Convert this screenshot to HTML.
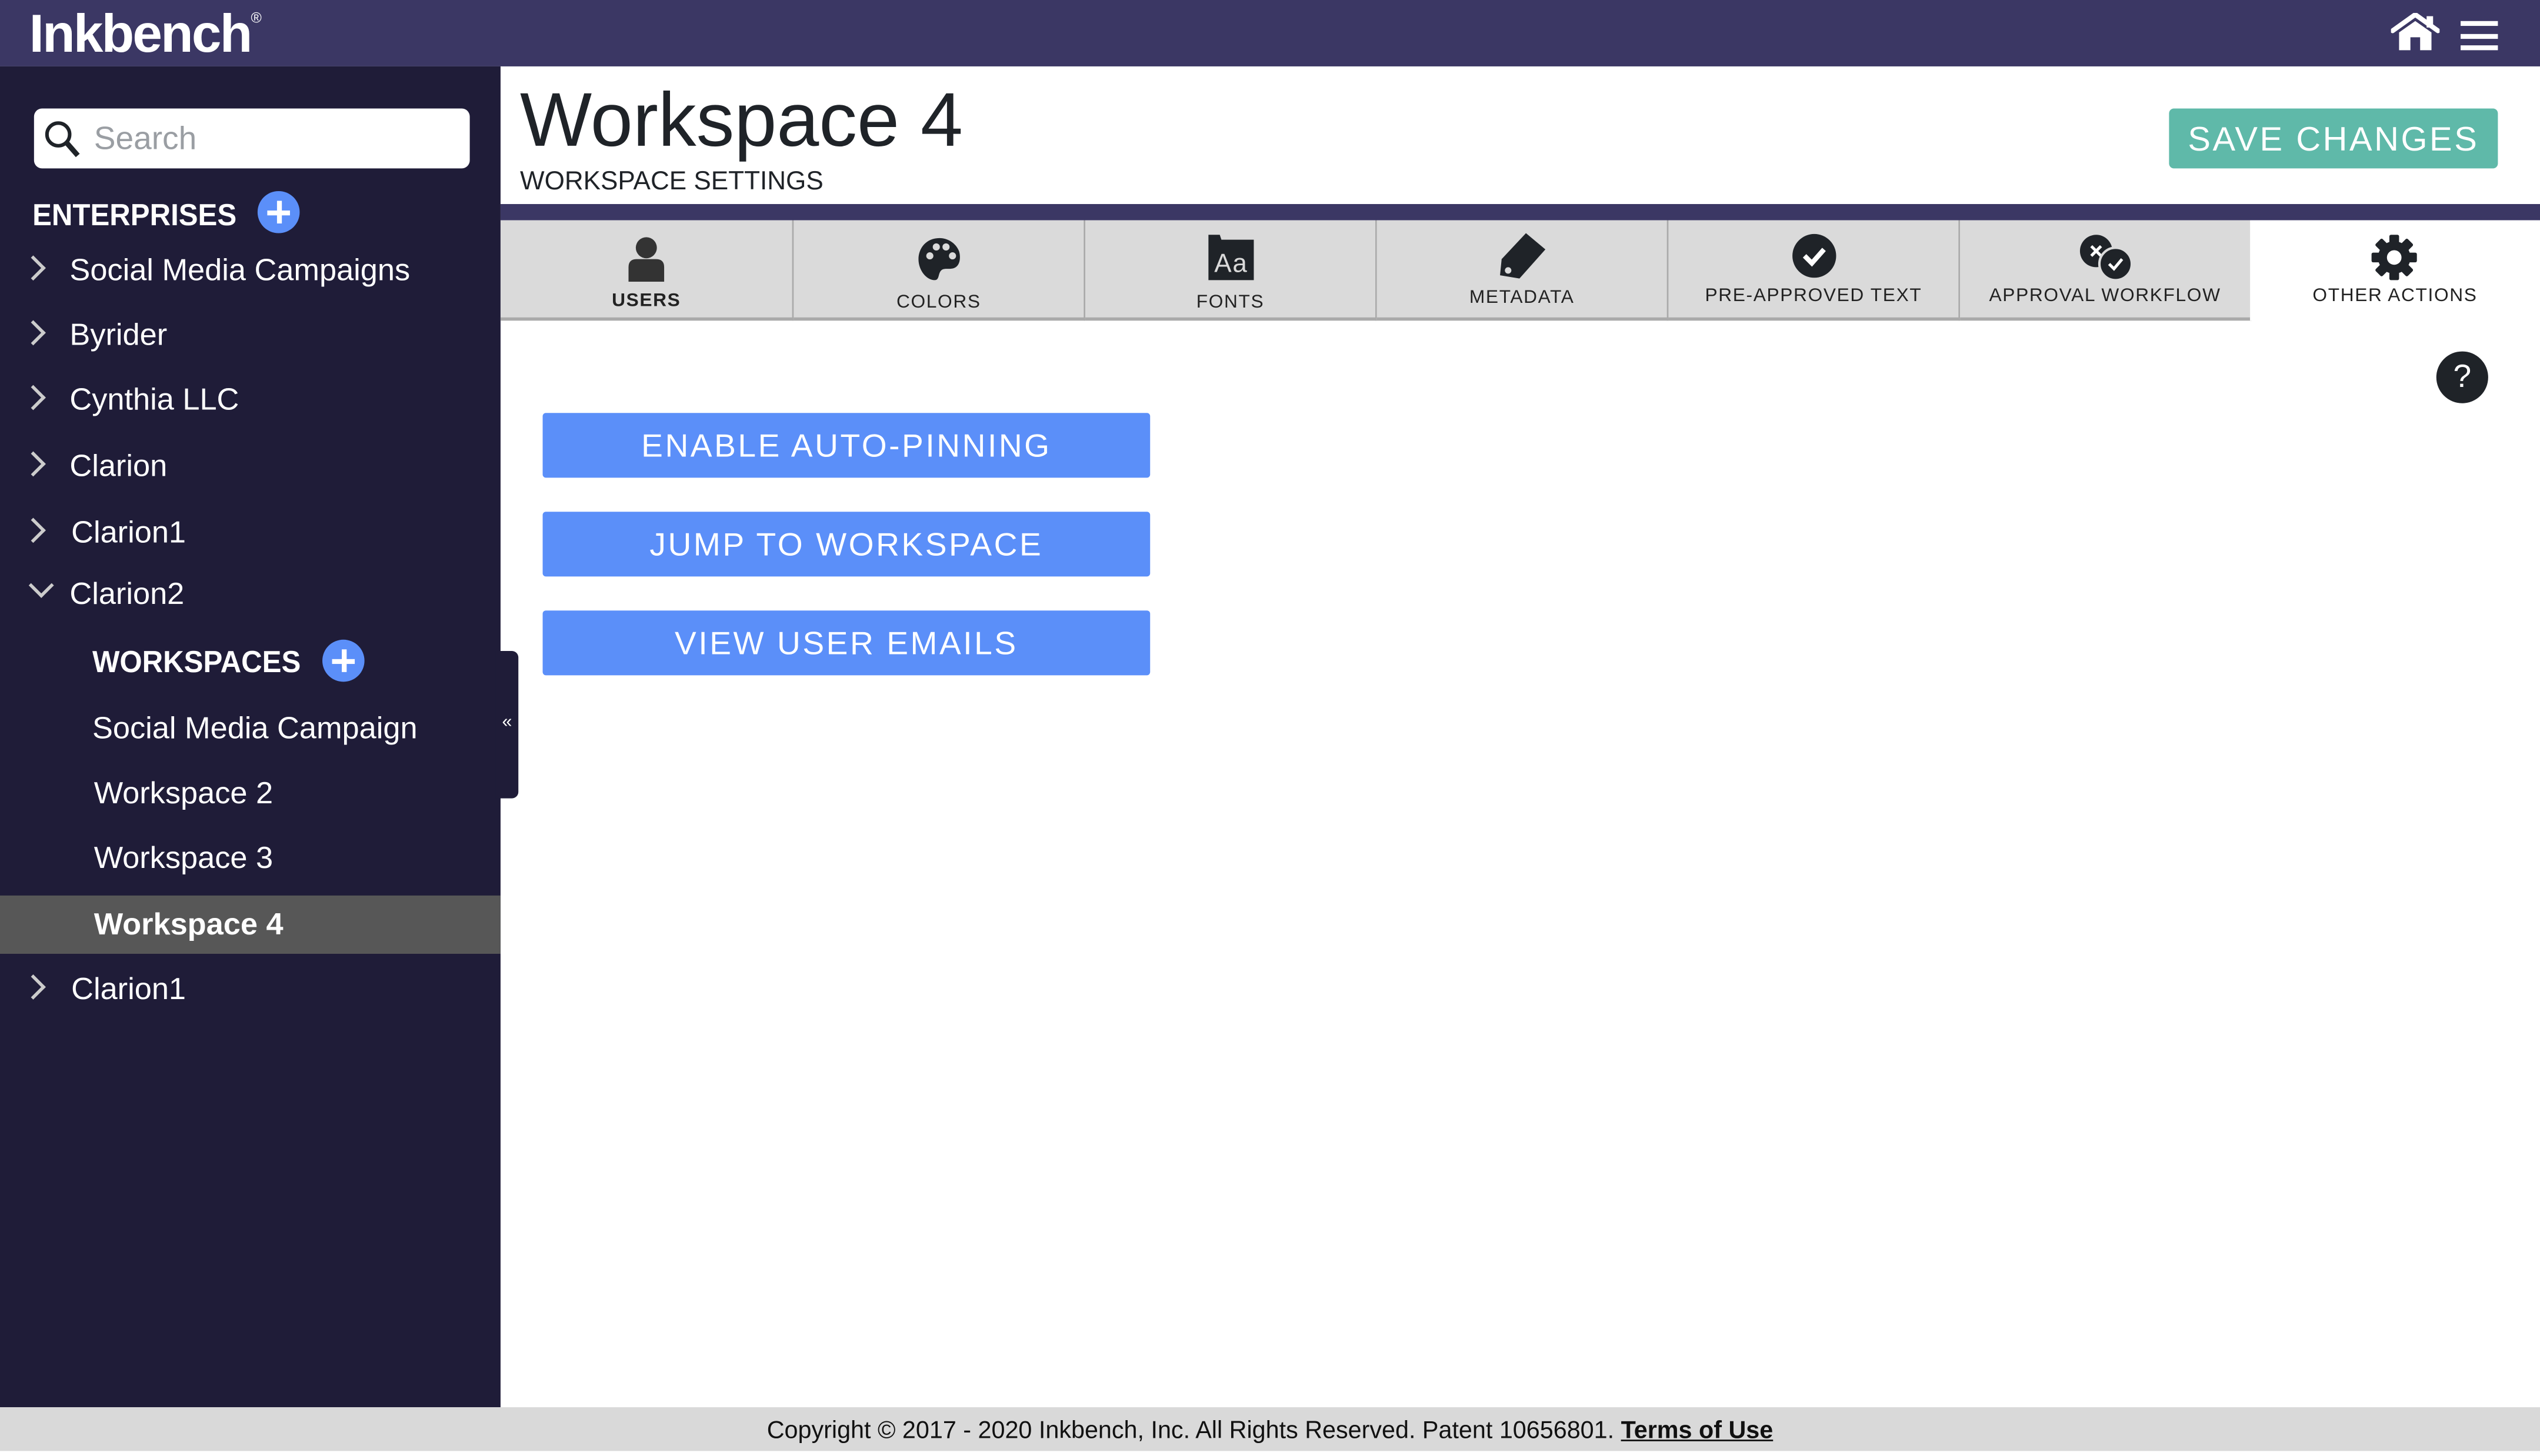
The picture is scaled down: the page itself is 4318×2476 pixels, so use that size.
<!DOCTYPE html>
<html><head><meta charset="utf-8"><style>
*{box-sizing:border-box;margin:0;padding:0}
html,body{width:4318px;height:2466px;overflow:hidden;background:#fff}
#w{position:absolute;left:0;top:0;width:1568px;height:896px;transform:scale(2.75383);transform-origin:0 0;font-family:"Liberation Sans",sans-serif;}
.a{position:absolute}
.side{color:#fff;font-size:19px;white-space:nowrap}
.chev{position:absolute;width:11px;height:11px;border-right:2px solid #ccc;border-top:2px solid #ccc;transform:rotate(45deg)}
.tab{position:absolute;top:136px;height:62px;background:#dadada;border-right:1px solid #aaa;border-bottom:2px solid #aaa;text-align:center;font-size:11.5px;letter-spacing:.6px;color:#222}
.tab svg{position:absolute;left:50%;transform:translateX(-50%)}
.tab span{position:absolute;left:0;right:0}
.btn{position:absolute;left:335px;width:375px;height:40px;background:#5b8ff9;color:#fff;font-size:20px;letter-spacing:1.3px;text-align:center;line-height:43px;border-radius:2px}
.plus{position:absolute;width:26px;height:26px;border-radius:50%;background:#5b8ff9}
.plus:before{content:"";position:absolute;left:6px;top:11.5px;width:14px;height:3px;background:#fff}
.plus:after{content:"";position:absolute;left:11.5px;top:6px;width:3px;height:14px;background:#fff}
</style></head><body><div id="w">
<div class="a" style="left:0;top:0;width:1568px;height:41px;background:#3b3764"></div>
<div class="a" style="left:18px;top:2px;color:#fff;font-size:33px;font-weight:bold;letter-spacing:-1px">Inkbench<sup style="font-size:9px;font-weight:normal;vertical-align:18px">®</sup></div>
<svg class="a" style="left:1476px;top:8px" width="30" height="24" viewBox="0 0 30 24"><path d="M1 11 L15 1 L29 11" stroke="#fff" stroke-width="3" fill="none" stroke-linecap="round"/><rect x="22" y="2" width="4" height="7" fill="#fff"/><path d="M5 12 L15 5 L25 12 V23 H18 V15 H12 V23 H5Z" fill="#fff"/></svg>
<div class="a" style="left:1519px;top:13px;width:23px;height:3px;background:#fff"></div>
<div class="a" style="left:1519px;top:20.5px;width:23px;height:3px;background:#fff"></div>
<div class="a" style="left:1519px;top:28px;width:23px;height:3px;background:#fff"></div>

<div class="a" style="left:0;top:41px;width:309px;height:828px;background:#1f1c38"></div>
<div class="a" style="left:21px;top:67px;width:269px;height:37px;background:#fff;border-radius:5px"></div>
<svg class="a" style="left:27px;top:74px" width="24" height="24" viewBox="0 0 24 24"><circle cx="9" cy="9" r="7" stroke="#1f2328" stroke-width="2.2" fill="none"/><path d="M14 14 L21 22" stroke="#1f2328" stroke-width="3.2"/></svg>
<div class="a" style="left:58px;top:75px;font-size:20px;color:#9a9ea3">Search</div>
<div class="a side" style="left:20px;top:123px;font-weight:bold;font-size:19px;transform:scaleX(.94);transform-origin:0 0">ENTERPRISES</div>
<div class="plus" style="left:159px;top:118px"></div>
<div class="chev" style="left:15px;top:160px"></div><div class="a side" style="left:43px;top:157px">Social Media Campaigns</div>
<div class="chev" style="left:15px;top:200px"></div><div class="a side" style="left:43px;top:197px">Byrider</div>
<div class="chev" style="left:15px;top:240px"></div><div class="a side" style="left:43px;top:237px">Cynthia LLC</div>
<div class="chev" style="left:15px;top:281px"></div><div class="a side" style="left:43px;top:278px">Clarion</div>
<div class="chev" style="left:15px;top:322px"></div><div class="a side" style="left:44px;top:319px">Clarion1</div>
<div class="chev" style="left:20px;top:356px;transform:rotate(135deg)"></div><div class="a side" style="left:43px;top:357px">Clarion2</div>
<div class="a side" style="left:57px;top:399px;font-weight:bold;transform:scaleX(.94);transform-origin:0 0">WORKSPACES</div>
<div class="plus" style="left:199px;top:395px"></div>
<div class="a side" style="left:57px;top:440px">Social Media Campaign</div>
<div class="a side" style="left:58px;top:480px">Workspace 2</div>
<div class="a side" style="left:58px;top:520px">Workspace 3</div>
<div class="a" style="left:0;top:553px;width:309px;height:36px;background:#575757"></div>
<div class="a side" style="left:58px;top:561px;font-weight:bold">Workspace 4</div>
<div class="chev" style="left:15px;top:604px"></div><div class="a side" style="left:44px;top:601px">Clarion1</div>
<div class="a" style="left:306px;top:402px;width:14px;height:91px;background:#1f1c38;border-radius:0 4px 4px 0;color:#fff;font-size:11px;line-height:88px;text-align:center">«</div>

<div class="a" style="left:321px;top:46px;font-size:47px;color:#1f2328;font-weight:500">Workspace 4</div>
<div class="a" style="left:321px;top:104px;font-size:16px;color:#1f2328">WORKSPACE SETTINGS</div>
<div class="a" style="left:1339px;top:67px;width:203px;height:37px;background:#5fb9a9;border-radius:3px;color:#fff;font-size:21px;letter-spacing:1.3px;text-align:center;line-height:40px">SAVE CHANGES</div>
<div class="a" style="left:309px;top:126px;width:1259px;height:10px;background:#3b3764"></div>

<div class="tab" style="left:309px;width:181px"><svg style="top:10px" width="24" height="28" viewBox="0 0 24 28"><circle cx="12" cy="7" r="6.5" fill="#333"/><path d="M1 28 V19 Q1 14 6 14 H18 Q23 14 23 19 V28Z" fill="#333"/></svg><span style="top:44px;font-weight:bold">USERS</span></div>
<div class="tab" style="left:490px;width:180px"><svg style="top:10px" width="28" height="28" viewBox="0 0 28 28"><path d="M14 1 C6 1 1 7 1 14 C1 21 6 27 11 27 C14 27 13 23 15 21 C17 19 21 21 24 19 C27 17 27 12 26 9 C24 4 19 1 14 1Z" fill="#1f2328"/><circle cx="8" cy="12" r="2.2" fill="#dadada"/><circle cx="12" cy="6.5" r="2.2" fill="#dadada"/><circle cx="18" cy="6.5" r="2.2" fill="#dadada"/><circle cx="22" cy="12" r="2.2" fill="#dadada"/></svg><span style="top:45px">COLORS</span></div>
<div class="tab" style="left:670px;width:180px"><svg style="top:8px" width="30" height="30" viewBox="0 0 30 30"><path d="M1 1 H8 L9 4 H29 V29 H1Z" fill="#1f2328"/><text x="15" y="24" text-anchor="middle" font-size="16" fill="#dadada" font-family="Liberation Sans">Aa</text></svg><span style="top:45px">FONTS</span></div>
<div class="tab" style="left:850px;width:180px"><svg style="top:6px" width="32" height="32" viewBox="0 0 32 32"><path d="M18 2 L30 12 L14 30 L2 28 L3 18Z" fill="#1f2328"/><circle cx="7" cy="25" r="2" fill="#dadada"/></svg><span style="top:42px">METADATA</span></div>
<div class="tab" style="left:1030px;width:180px"><svg style="top:8px" width="28" height="28" viewBox="0 0 28 28"><circle cx="14" cy="14" r="13.5" fill="#1f2328"/><path d="M8 14 L12.5 18.5 L20 10" stroke="#fff" stroke-width="3" fill="none"/></svg><span style="top:41px">PRE-APPROVED TEXT</span></div>
<div class="tab" style="left:1210px;width:180px"><svg style="top:8px" width="34" height="30" viewBox="0 0 34 30"><circle cx="11" cy="11" r="10" fill="#1f2328"/><path d="M8 8 L14 14 M14 8 L8 14" stroke="#fff" stroke-width="1.8"/><circle cx="23" cy="19" r="10" fill="#1f2328" stroke="#dadada" stroke-width="1.5"/><path d="M19 19 L22 22 L27 16" stroke="#fff" stroke-width="1.8" fill="none"/></svg><span style="top:41px">APPROVAL WORKFLOW</span></div>
<div class="a" style="left:1389px;top:136px;width:179px;height:62px;background:#fff;text-align:center;font-size:11.5px;letter-spacing:.6px;color:#222"><svg class="a" style="left:74px;top:8px" width="30" height="30" viewBox="0 0 30 30"><g fill="#1f2328"><circle cx="15" cy="15" r="10"/><rect x="12" y="1" width="6" height="28" rx="1"/><rect x="12" y="1" width="6" height="28" rx="1" transform="rotate(45 15 15)"/><rect x="12" y="1" width="6" height="28" rx="1" transform="rotate(90 15 15)"/><rect x="12" y="1" width="6" height="28" rx="1" transform="rotate(135 15 15)"/></g><circle cx="15" cy="15" r="4.5" fill="#fff"/></svg><span class="a" style="left:0;right:0;top:41px">OTHER ACTIONS</span></div>

<div class="a" style="left:1504px;top:217px;width:32px;height:32px;border-radius:50%;background:#1f2328;color:#fff;font-size:20px;text-align:center;line-height:32px">?</div>
<div class="btn" style="top:255px">ENABLE AUTO-PINNING</div>
<div class="btn" style="top:316px">JUMP TO WORKSPACE</div>
<div class="btn" style="top:377px">VIEW USER EMAILS</div>

<div class="a" style="left:0;top:869px;width:1568px;height:27px;background:#d9d9d9;text-align:center;font-size:15px;line-height:30px;color:#111">Copyright © 2017 - 2020 Inkbench, Inc. All Rights Reserved. Patent 10656801. <b style="text-decoration:underline">Terms of Use</b></div>
</div></body></html>
